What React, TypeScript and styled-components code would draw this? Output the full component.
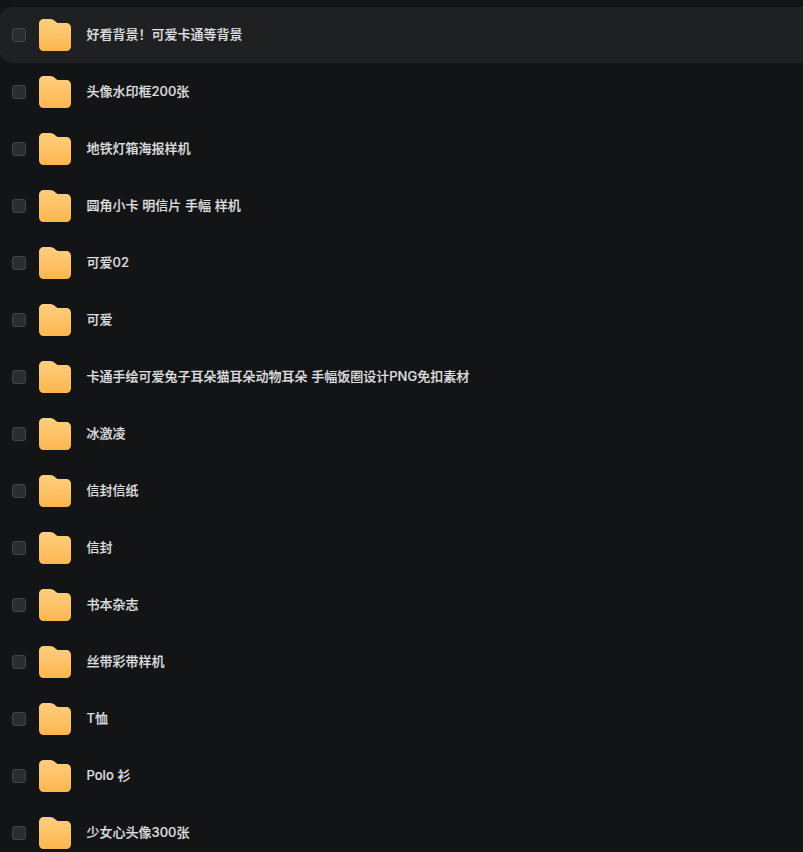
import React from "react";
import styled, { createGlobalStyle } from "styled-components";

const Global = createGlobalStyle`
  html, body { margin: 0; padding: 0; background: #121416; height: 100%; overflow: hidden; }
`;

const List = styled.div`
  display: flex;
  flex-direction: column;
  padding-top: 6px;
  height: 846px;
  overflow: hidden;
  background: #121416;
  font-family: Inter, "Noto Sans CJK SC", sans-serif;
`;

const Row = styled.div<{ $active?: boolean }>`
  flex: 0 0 56px;
  height: 56px;
  margin-top: 1px;
  display: flex;
  align-items: center;
  padding-left: 12px;
  border-radius: 12px 0 0 12px;
  background: ${(p) => (p.$active ? "#1e2022" : "transparent")};
`;

const Check = styled.span`
  box-sizing: border-box;
  width: 14px;
  height: 14px;
  border-radius: 3px;
  background: #2a2c2e;
  border: 1px solid #434547;
  margin-right: 13px;
  flex: none;
`;

const Folder = styled.svg`
  width: 32px;
  height: 32px;
  margin-right: 15.5px;
  flex: none;
  display: block;
`;

const Name = styled.span`
  font-size: 13px;
  font-weight: 500;
  line-height: 20px;
  margin-bottom: 2px;
  color: #dcddde;
  -webkit-text-stroke: 0.2px #dcddde;
  word-spacing: 0.3px;
  white-space: nowrap;
`;

const names = [
  "好看背景！可爱卡通等背景",
  "头像水印框200张",
  "地铁灯箱海报样机",
  "圆角小卡 明信片 手幅 样机",
  "可爱02",
  "可爱",
  "卡通手绘可爱兔子耳朵猫耳朵动物耳朵 手幅饭圈设计PNG免扣素材",
  "冰激凌",
  "信封信纸",
  "信封",
  "书本杂志",
  "丝带彩带样机",
  "T恤",
  "Polo 衫",
  "少女心头像300张",
];

const FolderIcon = ({ id }: { id: string }) => (
  <Folder viewBox="0 0 32 32" aria-hidden="true">
    <defs>
      <linearGradient id={id} x1="0" y1="0" x2="0" y2="1">
        <stop offset="0" stopColor="#ffcf7d" />
        <stop offset="1" stopColor="#fdb64f" />
      </linearGradient>
    </defs>
    <path
      d="M5 0H11C13.5 0 15 1 16.5 2.4C17.6 3.5 18.6 4 20.5 4H27C30 4 32 6 32 9V27C32 30 30 32 27 32H5C2 32 0 30 0 27V5C0 2 2 0 5 0Z"
      fill={`url(#${id})`}
    />
  </Folder>
);

export default function App() {
  return (
    <>
      <Global />
      <List>
        {names.map((n, i) => (
          <Row key={n} $active={i === 0}>
            <Check />
            <FolderIcon id={`folder-${i}`} />
            <Name>{n}</Name>
          </Row>
        ))}
      </List>
    </>
  );
}
